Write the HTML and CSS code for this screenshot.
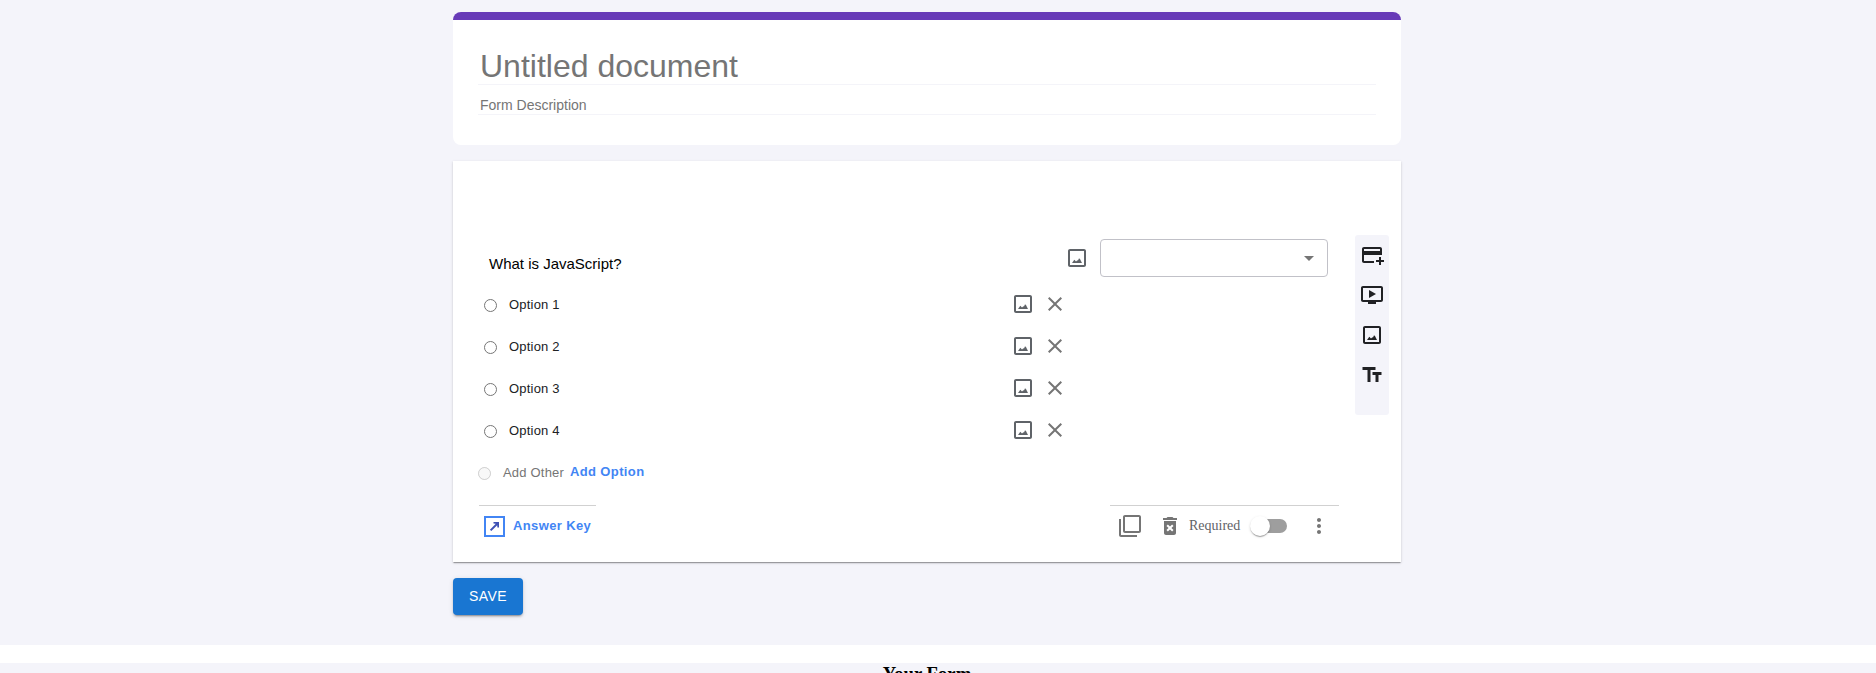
FILE: index.html
```html
<!DOCTYPE html>
<html lang="en">
<head>
<meta charset="utf-8">
<title>Form editor</title>
<link rel="stylesheet" href="styles.css">
</head>
<body>
<svg class="defs" aria-hidden="true">
  <symbol id="image" viewBox="0 0 24 24"><path d="M19 5v14H5V5h14m0-2H5c-1.100 0-2 .9-2 2v14c0 1.100.9 2 2 2h14c1.100 0 2-.9 2-2V5c0-1.100-.9-2-2-2z"/><path d="M7 17l2.300-3.200 1.700 1.700 1.400-1.300.6.300.9-1.900 1 .2.700 1.500L17 17z"/></symbol>
  <symbol id="close" viewBox="0 0 24 24"><path d="M19 6.410L17.590 5 12 10.590 6.410 5 5 6.410 10.590 12 5 17.590 6.410 19 12 13.410 17.590 19 19 17.590 13.410 12z"/></symbol>
</svg>
<main class="editor">
  <div class="column">
    <section class="card title-card">
      <div class="field form-title">Untitled document</div>
      <div class="field form-desc">Form Description</div>
    </section>

    <section class="card question-card">
      <div class="question-body">
        <div class="question-head">
          <div class="question-text">What is JavaScript?</div>
          <svg class="icon slate"><use href="#image"/></svg>
          <div class="select"><svg class="icon gray"><path d="M7 10l5 5 5-5z"/></svg></div>
        </div>
        <div class="option"><input type="radio"><span>Option 1</span><svg class="icon slate"><use href="#image"/></svg><svg class="icon gray"><use href="#close"/></svg></div>
        <div class="option"><input type="radio"><span>Option 2</span><svg class="icon slate"><use href="#image"/></svg><svg class="icon gray"><use href="#close"/></svg></div>
        <div class="option"><input type="radio"><span>Option 3</span><svg class="icon slate"><use href="#image"/></svg><svg class="icon gray"><use href="#close"/></svg></div>
        <div class="option"><input type="radio"><span>Option 4</span><svg class="icon slate"><use href="#image"/></svg><svg class="icon gray"><use href="#close"/></svg></div>
        <div class="option add-row"><input type="radio" disabled><span class="add-other">Add Other</span><b class="link add-option">Add Option</b></div>
        <div class="question-foot">
          <div class="answer-key">
            <span class="key-box"><svg viewBox="0 0 17 17"><path d="M7.500 4H13v5.500h-1.600L11.200 7.200 5.300 13.100 3.900 11.700 9.800 5.800 7.500 5.600z" fill="#3f51b5"/></svg></span>
            <b class="link">Answer Key</b>
          </div>
          <div class="actions">
            <svg class="icon gray" viewBox="0 0 24 24"><path d="M3 5H1v16c0 1.100.9 2 2 2h16v-2H3V5zm18-4H7c-1.100 0-2 .9-2 2v14c0 1.100.9 2 2 2h14c1.100 0 2-.9 2-2V3c0-1.100-.9-2-2-2zm0 16H7V3h14v14z"/></svg>
            <svg class="icon gray trash" viewBox="0 0 24 24"><path fill-rule="evenodd" d="M6 19c0 1.100.9 2 2 2h8c1.100 0 2-.9 2-2V7H6v12zm2.460-7.120l1.410-1.410L12 12.590l2.120-2.120 1.410 1.410L13.410 14l2.120 2.120-1.410 1.410L12 15.410l-2.120 2.120-1.410-1.410L10.590 14l-2.130-2.120zM15.500 4l-1-1h-5l-1 1H5v2h14V4z"/></svg>
            <span class="required">Required</span>
            <span class="switch"><i></i></span>
            <svg class="icon gray dots" viewBox="0 0 24 24"><path d="M12 8c1.100 0 2-.9 2-2s-.9-2-2-2-2 .9-2 2 .9 2 2 2zm0 2c-1.100 0-2 .9-2 2s.9 2 2 2 2-.9 2-2-.9-2-2-2zm0 6c-1.100 0-2 .9-2 2s.9 2 2 2 2-.9 2-2-.9-2-2-2z"/></svg>
          </div>
        </div>
      </div>
      <aside class="tools">
        <svg class="icon" viewBox="0 0 24 24"><path d="M20 4H4c-1.110 0-2 .890-2 2v12c0 1.110.890 2 2 2h10v-2H4v-6h18V6c0-1.110-.890-2-2-2zm0 4H4V6h16v2zm4 9v2h-3v3h-2v-3h-3v-2h3v-3h2v3h3z"/></svg>
        <svg class="icon" viewBox="0 0 24 24"><path d="M21 3H3c-1.110 0-2 .890-2 2v12c0 1.100.890 2 2 2h5v2h8v-2h5c1.100 0 1.990-.9 1.990-2L23 5c0-1.110-.9-2-2-2zm0 14H3V5h18v12zm-5-6l-7 4V7z"/></svg>
        <svg class="icon"><use href="#image"/></svg>
        <svg class="icon" viewBox="0 0 24 24"><path d="M2.500 4v3h5v12h3V7h5V4h-13zm19 5h-9v3h3v7h3v-7h3V9z"/></svg>
      </aside>
    </section>
    <button class="save">SAVE</button>
  </div>
</main>
<section class="preview"><h3>Your Form</h3></section>
</body>
</html>
```
FILE: styles.css
```css
* { box-sizing: border-box; }
html, body { height: 100%; }
body { margin: 0; background: #fff; overflow: hidden; font-family: "Liberation Sans", Arial, sans-serif; }
.defs { width: 0; height: 0; display: none; }
.icon { width: 24px; height: 24px; flex: none; fill: #202124; display: block; }
.icon.gray { fill: #757575; }
.icon.slate { fill: #5f6368; }

.editor { height: 645px; padding: 12px 22px 0 0; background: #f4f4fa; }
.column { width: 948px; margin: 0 auto; }
.card { background: #fff; }

.title-card { height: 133px; border-top: 8px solid #673ab7; border-radius: 8px; padding: 24px 25px 0; }
.field { border-bottom: 1px solid #f4f4f9; padding-left: 2px; color: #757575; }
.form-title { height: 41px; font-size: 32px; line-height: 44px; }
.form-desc { height: 30px; font-size: 14px; line-height: 40px; }

.question-card { display: flex; justify-content: space-between; height: 401px; margin-top: 16px; padding: 74px 12px 0 25px;
  box-shadow: 0 2px 1px -1px rgba(0,0,0,.2), 0 1px 1px rgba(0,0,0,.14), 0 1px 3px rgba(0,0,0,.12); }
.question-body { width: 862px; }
.question-head { display: flex; align-items: center; height: 46px; }
.question-text { width: 587px; padding: 11px 0 0 11px; font-size: 15px; line-height: 17px; }
.select { display: flex; align-items: center; justify-content: flex-end; width: 228px; height: 38px; margin-left: 11px; padding-right: 6px; border: 1px solid #c1c1c8; border-radius: 4px; }

.option { display: flex; align-items: center; height: 42px; padding-left: 6px; }
.option:nth-child(2) { margin-top: 2px; }
.option input { width: 13px; height: 13px; margin: 3px 12px 0 0; }
.option span { width: 502px; font-size: 13px; line-height: 15px; letter-spacing: .2px; color: #202124; }
.option .icon + .icon { margin-left: 8px; }
.add-row { padding-left: 0; }
.option .add-other { width: 67px; color: #757575; }
.link { font-size: 13px; line-height: 15px; letter-spacing: .37px; color: #4285f4; }
.add-option { padding-bottom: 2px; }

.question-foot { display: flex; justify-content: space-between; margin: 12px 38px 0 1px; }
.answer-key { display: flex; align-items: flex-start; width: 117px; border-top: 1px solid #d1d1d1; padding: 10px 0 0 5px; }
.key-box { display: flex; width: 21px; height: 21px; margin-right: 8px; border: 2px solid #4285f4; }
.key-box svg { width: 17px; height: 17px; }
.answer-key .link { margin-top: 2px; white-space: nowrap; }
.actions { display: flex; align-items: center; width: 229px; height: 41px; border-top: 1px solid #d1d1d1; padding-left: 8px; margin-right: -37px; }
.trash { margin-left: 16px; }
.required { width: 52px; margin-left: 7px; font: 14px/16px "Liberation Serif", "Times New Roman", serif; color: #5f6368; }
.switch { display: flex; align-items: center; width: 34px; height: 14px; margin-left: 12px; border-radius: 7px; background: #9e9e9e; }
.switch i { width: 20px; height: 20px; flex: none; margin-left: -3px; border-radius: 50%; background: #fff; box-shadow: 0 2px 1px -1px rgba(0,0,0,.2), 0 1px 1px rgba(0,0,0,.14), 0 1px 3px rgba(0,0,0,.12); }
.dots { margin-left: 20px; }

.tools { display: flex; flex-direction: column; align-items: center; gap: 16px; width: 34px; height: 180px; padding-top: 8px; background: #f4f4fa; border-radius: 3px; }

.save { display: block; width: 70px; height: 37px; margin: 16px 0 0; padding: 0 0 1px; border: 0; border-radius: 4px; background: #1976d2; color: #fff;
  font: 14px/24px "Liberation Sans", Arial, sans-serif; letter-spacing: .4px;
  box-shadow: 0 3px 1px -2px rgba(0,0,0,.2), 0 2px 2px rgba(0,0,0,.14), 0 1px 5px rgba(0,0,0,.12); }

.preview { height: 10px; overflow: hidden; margin-top: 18px; padding-right: 22px; background: #f4f4fa; }
.preview h3 { margin: 0; text-align: center; font: bold 18.720px/21px "Liberation Serif", "Times New Roman", serif; color: #000; }
```
